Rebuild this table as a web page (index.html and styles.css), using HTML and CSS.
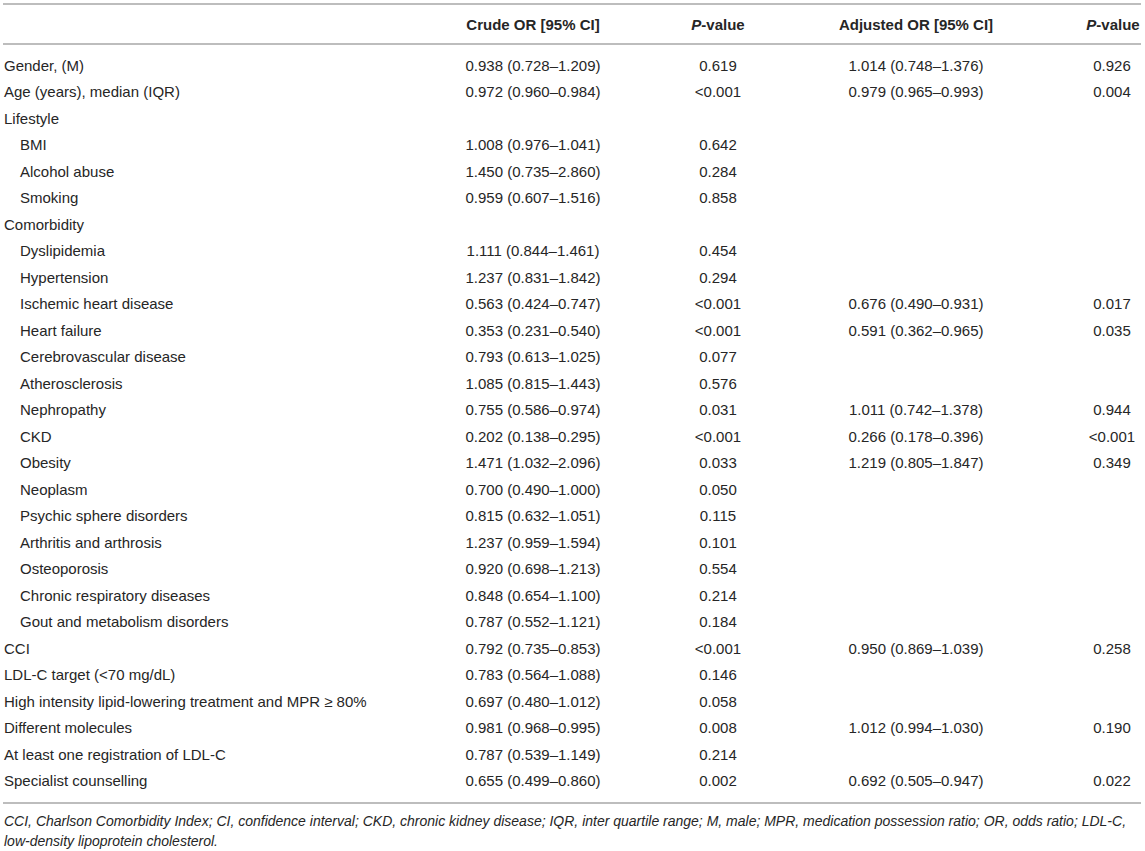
FILE: index.html
```html
<!DOCTYPE html>
<html lang="en">
<head>
<meta charset="utf-8">
<title>Odds ratios</title>
<link rel="stylesheet" href="styles.css">
</head>
<body>
<div class="page">
  <div class="tbl">
    <div class="row head">
      <div class="c lbl"></div>
      <div class="c">Crude OR [95% CI]</div>
      <div class="c"><i>P</i>-value</div>
      <div class="c">Adjusted OR [95% CI]</div>
      <div class="c"><i>P</i>-value</div>
    </div>
    <div class="body">
      <div class="row"><div class="c lbl">Gender, (M)</div><div class="c">0.938 (0.728–1.209)</div><div class="c">0.619</div><div class="c">1.014 (0.748–1.376)</div><div class="c">0.926</div></div>
      <div class="row"><div class="c lbl">Age (years), median (IQR)</div><div class="c">0.972 (0.960–0.984)</div><div class="c">&lt;0.001</div><div class="c">0.979 (0.965–0.993)</div><div class="c">0.004</div></div>
      <div class="row"><div class="c lbl">Lifestyle</div><div class="c"></div><div class="c"></div><div class="c"></div><div class="c"></div></div>
      <div class="row"><div class="c lbl sub">BMI</div><div class="c">1.008 (0.976–1.041)</div><div class="c">0.642</div><div class="c"></div><div class="c"></div></div>
      <div class="row"><div class="c lbl sub">Alcohol abuse</div><div class="c">1.450 (0.735–2.860)</div><div class="c">0.284</div><div class="c"></div><div class="c"></div></div>
      <div class="row"><div class="c lbl sub">Smoking</div><div class="c">0.959 (0.607–1.516)</div><div class="c">0.858</div><div class="c"></div><div class="c"></div></div>
      <div class="row"><div class="c lbl">Comorbidity</div><div class="c"></div><div class="c"></div><div class="c"></div><div class="c"></div></div>
      <div class="row"><div class="c lbl sub">Dyslipidemia</div><div class="c">1.111 (0.844–1.461)</div><div class="c">0.454</div><div class="c"></div><div class="c"></div></div>
      <div class="row"><div class="c lbl sub">Hypertension</div><div class="c">1.237 (0.831–1.842)</div><div class="c">0.294</div><div class="c"></div><div class="c"></div></div>
      <div class="row"><div class="c lbl sub">Ischemic heart disease</div><div class="c">0.563 (0.424–0.747)</div><div class="c">&lt;0.001</div><div class="c">0.676 (0.490–0.931)</div><div class="c">0.017</div></div>
      <div class="row"><div class="c lbl sub">Heart failure</div><div class="c">0.353 (0.231–0.540)</div><div class="c">&lt;0.001</div><div class="c">0.591 (0.362–0.965)</div><div class="c">0.035</div></div>
      <div class="row"><div class="c lbl sub">Cerebrovascular disease</div><div class="c">0.793 (0.613–1.025)</div><div class="c">0.077</div><div class="c"></div><div class="c"></div></div>
      <div class="row"><div class="c lbl sub">Atherosclerosis</div><div class="c">1.085 (0.815–1.443)</div><div class="c">0.576</div><div class="c"></div><div class="c"></div></div>
      <div class="row"><div class="c lbl sub">Nephropathy</div><div class="c">0.755 (0.586–0.974)</div><div class="c">0.031</div><div class="c">1.011 (0.742–1.378)</div><div class="c">0.944</div></div>
      <div class="row"><div class="c lbl sub">CKD</div><div class="c">0.202 (0.138–0.295)</div><div class="c">&lt;0.001</div><div class="c">0.266 (0.178–0.396)</div><div class="c">&lt;0.001</div></div>
      <div class="row"><div class="c lbl sub">Obesity</div><div class="c">1.471 (1.032–2.096)</div><div class="c">0.033</div><div class="c">1.219 (0.805–1.847)</div><div class="c">0.349</div></div>
      <div class="row"><div class="c lbl sub">Neoplasm</div><div class="c">0.700 (0.490–1.000)</div><div class="c">0.050</div><div class="c"></div><div class="c"></div></div>
      <div class="row"><div class="c lbl sub">Psychic sphere disorders</div><div class="c">0.815 (0.632–1.051)</div><div class="c">0.115</div><div class="c"></div><div class="c"></div></div>
      <div class="row"><div class="c lbl sub">Arthritis and arthrosis</div><div class="c">1.237 (0.959–1.594)</div><div class="c">0.101</div><div class="c"></div><div class="c"></div></div>
      <div class="row"><div class="c lbl sub">Osteoporosis</div><div class="c">0.920 (0.698–1.213)</div><div class="c">0.554</div><div class="c"></div><div class="c"></div></div>
      <div class="row"><div class="c lbl sub">Chronic respiratory diseases</div><div class="c">0.848 (0.654–1.100)</div><div class="c">0.214</div><div class="c"></div><div class="c"></div></div>
      <div class="row"><div class="c lbl sub">Gout and metabolism disorders</div><div class="c">0.787 (0.552–1.121)</div><div class="c">0.184</div><div class="c"></div><div class="c"></div></div>
      <div class="row"><div class="c lbl">CCI</div><div class="c">0.792 (0.735–0.853)</div><div class="c">&lt;0.001</div><div class="c">0.950 (0.869–1.039)</div><div class="c">0.258</div></div>
      <div class="row"><div class="c lbl">LDL-C target (&lt;70 mg/dL)</div><div class="c">0.783 (0.564–1.088)</div><div class="c">0.146</div><div class="c"></div><div class="c"></div></div>
      <div class="row"><div class="c lbl">High intensity lipid-lowering treatment and MPR ≥ 80%</div><div class="c">0.697 (0.480–1.012)</div><div class="c">0.058</div><div class="c"></div><div class="c"></div></div>
      <div class="row"><div class="c lbl">Different molecules</div><div class="c">0.981 (0.968–0.995)</div><div class="c">0.008</div><div class="c">1.012 (0.994–1.030)</div><div class="c">0.190</div></div>
      <div class="row"><div class="c lbl">At least one registration of LDL-C</div><div class="c">0.787 (0.539–1.149)</div><div class="c">0.214</div><div class="c"></div><div class="c"></div></div>
      <div class="row"><div class="c lbl">Specialist counselling</div><div class="c">0.655 (0.499–0.860)</div><div class="c">0.002</div><div class="c">0.692 (0.505–0.947)</div><div class="c">0.022</div></div>
    </div>
  </div>
  <p class="note">CCI, Charlson Comorbidity Index; CI, confidence interval; CKD, chronic kidney disease; IQR, inter quartile range; M, male; MPR, medication possession ratio; OR, odds ratio; LDL-C, low-density lipoprotein cholesterol.</p>
</div>
</body>
</html>
```

FILE: styles.css
```css
html, body {
  margin: 0;
  padding: 0;
  background: #ffffff;
}

.page {
  width: 1138px;
  padding-left: 3px;
  font-family: "Liberation Sans", Arial, Helvetica, sans-serif;
  font-size: 15px;
  color: #262626;
}

.tbl {
  margin-top: 3px;
  border-top: 2px solid #bdbdbd;
  border-bottom: 2px solid #bdbdbd;
}

.row {
  display: grid;
  grid-template-columns: 376px 308px 62px 334px 58px;
  height: 26.5px;
  align-items: center;
}

.head {
  height: 38px;
  font-weight: bold;
  border-bottom: 2px solid #bdbdbd;
}

.head .c:last-child {
  padding-left: 2px;
}

.body {
  padding: 7px 0 8px;
}

.c {
  text-align: center;
  white-space: nowrap;
}

.c.lbl {
  text-align: left;
  padding-left: 1px;
}

.c.sub {
  padding-left: 17px;
}

.note {
  margin: 7px 0 0;
  font-style: italic;
  font-size: 14px;
  line-height: 20px;
  padding-left: 1px;
}
```
